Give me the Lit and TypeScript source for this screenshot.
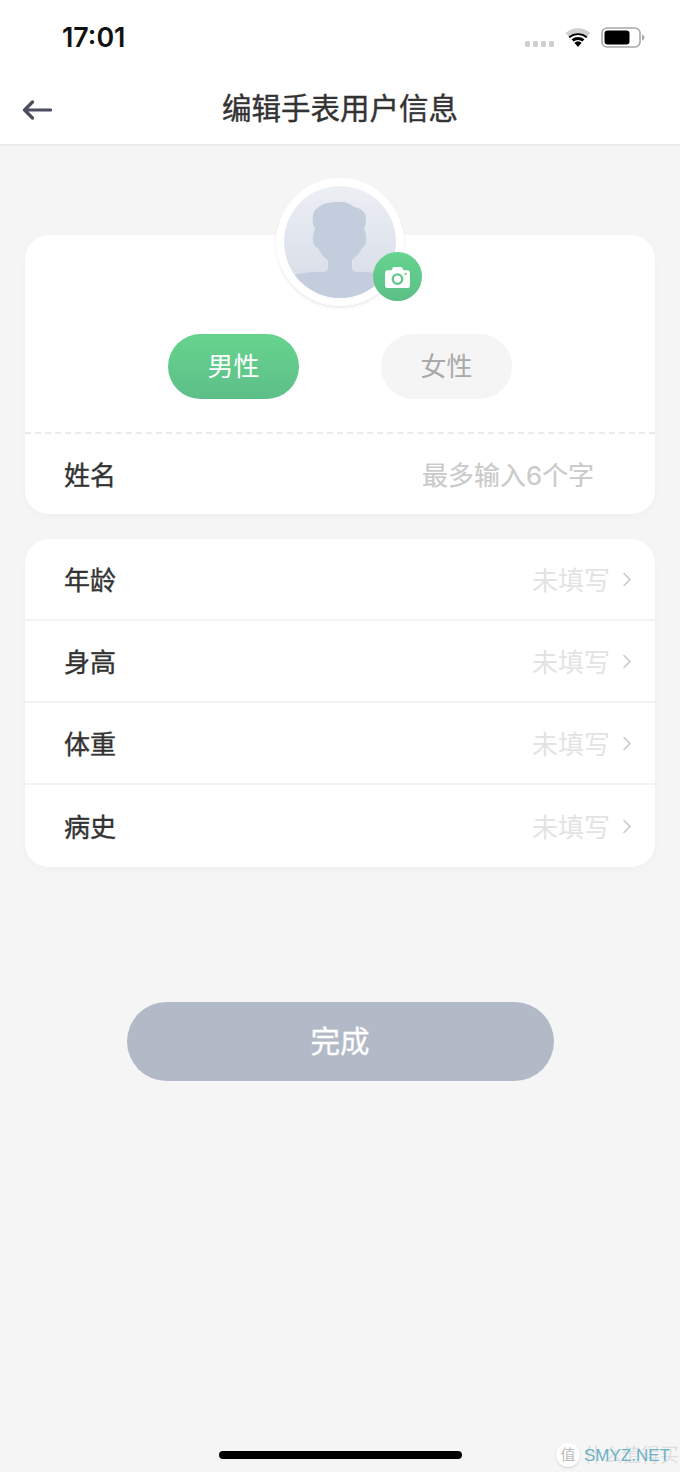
import { LitElement, html, css, svg } from "lit";
import { customElement } from "lit/decorators.js";

const FONT = css`"Inter", "Noto Sans CJK SC", "Noto Sans", sans-serif`;

@customElement("app-root")
export class AppRoot extends LitElement {
  static styles = css`
    :host {
      display: block;
      position: relative;
      width: 680px;
      height: 1472px;
      overflow: hidden;
      background: #f5f5f5;
      font-family: ${FONT};
      color: #333;
    }
    * { box-sizing: border-box; }
    .top {
      height: 146px;
      background: #fff;
      border-bottom: 2px solid #ececec;
      display: flex;
      flex-direction: column;
    }
    .status {
      height: 72px;
      display: flex;
      align-items: center;
      padding: 2px 35px 0 62px;
    }
    .time {
      font-size: 26.8px;
      font-weight: 600;
      color: #111;
      line-height: 1;
    }
    .status-icons {
      margin-left: auto;
      display: flex;
      align-items: center;
      gap: 10px;
    }
    .dots { margin-top: 14px; }
    .nav {
      height: 72px;
      display: grid;
      grid-template-columns: 1fr auto 1fr;
      align-items: center;
      padding: 0 22px;
    }
    .title {
      font-size: 29.5px;
      font-weight: 400;
      color: #333;
      line-height: 1;
      padding-top: 2px;
      -webkit-text-stroke: 0.4px #333;
    }
    .back { display: block; margin-top: 4px; }
    main {
      padding: 32px 25px 0;
      display: flex;
      flex-direction: column;
    }
    .avatar-wrap {
      align-self: center;
      position: relative;
      z-index: 1;
      width: 128px;
      height: 128px;
      margin-bottom: -71px;
      border-radius: 50%;
      background: #fff;
      box-shadow: 0 2px 3px rgba(0, 0, 0, 0.08);
      display: flex;
      align-items: center;
      justify-content: center;
    }
    .avatar {
      width: 112px;
      height: 112px;
      display: block;
    }
    .cam {
      position: absolute;
      left: 97px;
      top: 74px;
      width: 49px;
      height: 49px;
      border-radius: 50%;
      background: linear-gradient(180deg, #66d38f, #5cbf87);
      display: flex;
      align-items: center;
      justify-content: center;
    }
    .card {
      background: #fff;
      border-radius: 24px;
      box-shadow: 0 3px 8px rgba(0, 0, 0, 0.025);
    }
    .c1 { padding-top: 99px; }
    .genders {
      display: flex;
      justify-content: center;
      gap: 82px;
      padding-bottom: 33px;
      border-bottom: 2px dashed #ebebeb;
    }
    .pill {
      width: 131px;
      height: 65px;
      border-radius: 33px;
      display: flex;
      align-items: center;
      justify-content: center;
      font-size: 26px;
      line-height: 1;
    }
    .male {
      background: linear-gradient(180deg, #66d48e, #5dbf88);
      color: #fff;
    }
    .female {
      background: #f5f5f5;
      color: #a9a9a9;
    }
    .name-row {
      height: 80px;
      display: flex;
      align-items: center;
      padding: 0 61px 2px 39px;
      font-size: 26px;
    }
    .label { -webkit-text-stroke: 0.4px #333; }
    .placeholder {
      margin-left: auto;
      color: #cacaca;
      font-size: 26px;
      -webkit-text-stroke: 0.2px #cacaca;
    }
    .c2 { margin-top: 25px; }
    .row {
      height: 82px;
      display: flex;
      align-items: center;
      padding: 0 24px 2px 39px;
      font-size: 26px;
      border-bottom: 2px solid #f2f2f2;
    }
    .row:last-child { border-bottom: 0; }
    .val {
      margin-left: auto;
      color: #e3e3e3;
      margin-right: 12px;
    }
    .chev { margin: 2px 0 0 1px; }
    .done {
      margin: 135px auto 0;
      width: 427px;
      height: 79px;
      border-radius: 40px;
      background: #b3bac7;
      color: #fff;
      display: flex;
      align-items: center;
      justify-content: center;
      font-size: 29.5px;
      padding-bottom: 6px;
      -webkit-text-stroke: 0.3px #fff;
    }
    .home {
      position: absolute;
      left: 219px;
      top: 1451px;
      width: 243px;
      height: 8px;
      border-radius: 4px;
      background: #000;
    }
    .wm {
      position: absolute;
      left: 556px;
      top: 1443px;
      display: flex;
      align-items: center;
      gap: 4px;
    }
    .wm-badge {
      width: 24px;
      height: 24px;
      border-radius: 50%;
      background: #fff;
      box-shadow: 0 1px 2px rgba(0, 0, 0, 0.15);
      color: #bbb;
      font-size: 15px;
      line-height: 24px;
      text-align: center;
    }
    .wm-text {
      position: relative;
      font-family: "Liberation Sans", sans-serif;
      font-size: 17px;
      color: #6db3c6;
      line-height: 1;
    }
    .wm-faint {
      position: absolute;
      left: 28px;
      top: 3px;
      font-size: 19px;
      line-height: 1;
      white-space: nowrap;
      color: #dedede;
    }
  `;

  private chevron() {
    return html`<svg class="chev" width="8" height="15" viewBox="0 0 8 15" fill="none"><path d="M1 1.500l6 6-6 6" stroke="#c6c6c6" stroke-width="1.500" stroke-linecap="round" stroke-linejoin="round"/></svg>`;
  }

  private avatar() {
    return html`<svg class="avatar" viewBox="0 0 112 112">
      <defs>
        <linearGradient id="ag" x1="0" y1="0" x2="0" y2="1">
          <stop offset="0" stop-color="#eceff4"/>
          <stop offset="1" stop-color="#d5dbe6"/>
        </linearGradient>
        <clipPath id="ac"><circle cx="56" cy="56" r="56"/></clipPath>
      </defs>
      <circle cx="56" cy="56" r="56" fill="url(#ag)"/>
      <g clip-path="url(#ac)" fill="#c4cddd">
        ${svg`<path d="M44 82V74C38 70 36 66 34 62C30 61 28 56 29 50C29 47 30 45 31 43C28 38 28 30 30 26C33 20 42 16 52 16C60 15 66 17 70 21C78 22 82 27 82 33C82 37 81 41 80 43C82 46 82 50 82 53C82 58 80 61 78 62C76 67 72 71 68 74V82C68 85 70 86 74 86C90 86 104 88 112 94V112H0V94C8 88 22 86 38 86C42 86 44 85 44 82z"/>`}
      </g>
    </svg>`;
  }

  private row(label: string) {
    return html`<div class="row"><span class="label">${label}</span><span class="val">未填写</span>${this.chevron()}</div>`;
  }

  render() {
    return html`
      <div class="top">
        <div class="status">
          <span class="time">17:01</span>
          <div class="status-icons">
            <svg class="dots" width="30" height="8" viewBox="0 0 30 8">
              <g fill="#cfcfcf">
                <rect x="0" y="1" width="5" height="6" rx="1.500"/>
                <rect x="8" y="1" width="5" height="6" rx="1.500"/>
                <rect x="16" y="1" width="5" height="6" rx="1.500"/>
                <rect x="24" y="1" width="5" height="6" rx="1.500"/>
              </g>
            </svg>
            <svg width="26" height="21" viewBox="0 0 26 21">
              <path d="M13 20l-3.600-4.300a5.600 5.600 0 0 1 7.200 0z" fill="#000"/>
              <path d="M6.600 12.300a10 10 0 0 1 12.800 0l-1.900 2.300a7 7 0 0 0-9 0z" fill="#000"/>
              <path d="M0.500 5.900a19 19 0 0 1 25 0l-4.300 5a12.600 12.600 0 0 0-16.400 0z" fill="#d0d0d0"/>
              <path d="M3.600 9.600a14.500 14.500 0 0 1 18.800 0l-1.200 1.400a12.600 12.600 0 0 0-16.400 0z" fill="#000"/>
            </svg>
            <svg width="44" height="21" viewBox="0 0 44 21">
              <rect x="1" y="1" width="38" height="19" rx="5" fill="#fff" stroke="#a8a8a8" stroke-width="1.600"/>
              <rect x="3.500" y="3.500" width="25" height="14" rx="3" fill="#000"/>
              <path d="M41 7.500c1.600.5 2.400 1.600 2.400 3s-.8 2.500-2.400 3z" fill="#a8a8a8"/>
            </svg>
          </div>
        </div>
        <div class="nav">
          <svg class="back" width="30" height="22" viewBox="0 0 30 22" fill="none">
            <path d="M28.500 11H2.500M10.500 3L2.500 11l8 8" stroke="#4d4d62" stroke-width="3.200" stroke-linecap="round" stroke-linejoin="round"/>
          </svg>
          <span class="title">编辑手表用户信息</span>
          <span></span>
        </div>
      </div>
      <main>
        <div class="avatar-wrap">
          ${this.avatar()}
          <div class="cam">
            <svg width="25" height="22" viewBox="0 0 26 23">
              <path fill-rule="evenodd" fill="#fff" d="M8.500 1h9l1.800 3.500H23a3 3 0 0 1 3 3V20a3 3 0 0 1-3 3H3a3 3 0 0 1-3-3V7.500a3 3 0 0 1 3-3h3.700zM13 7.500a6.200 6.200 0 1 0 0 12.400 6.200 6.200 0 0 0 0-12.400zm0 2.500a3.700 3.700 0 1 1 0 7.400 3.700 3.700 0 0 1 0-7.400zM21.500 7a1.200 1.200 0 1 0 0 2.400 1.200 1.200 0 0 0 0-2.400z"/>
            </svg>
          </div>
        </div>
        <section class="card c1">
          <div class="genders">
            <div class="pill male">男性</div>
            <div class="pill female">女性</div>
          </div>
          <div class="name-row"><span class="label">姓名</span><span class="placeholder">最多输入6个字</span></div>
        </section>
        <section class="card c2">
          ${this.row("年龄")}
          ${this.row("身高")}
          ${this.row("体重")}
          ${this.row("病史")}
        </section>
        <div class="done">完成</div>
      </main>
      <div class="home"></div>
      <div class="wm"><span class="wm-badge">值</span><span class="wm-faint">什么值得买</span><span class="wm-text">SMYZ.NET</span></div>
    `;
  }
}
